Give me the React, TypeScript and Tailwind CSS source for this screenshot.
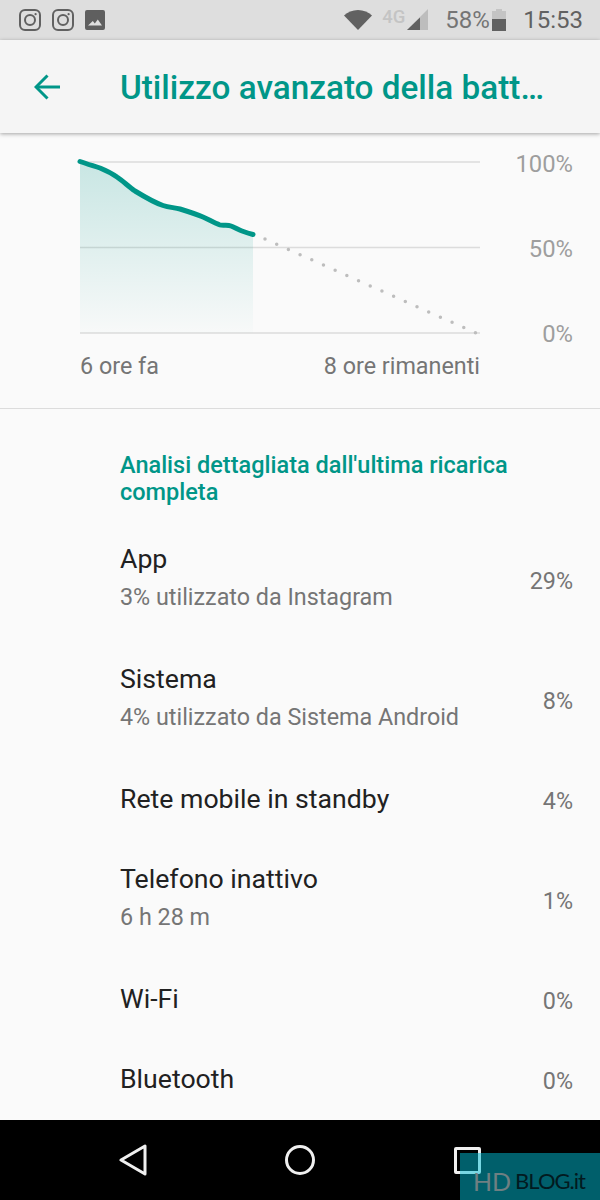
const curve = 'M80 161.5 C87 164 94 166 100 168 C106 170.5 112 173.5 117 177 C123 181 129 187 135 191 C144 196.5 154 202.5 163 205.5 C169 207.5 174 207.5 180 209 C188 211.5 196 214 203 217 C209 219.5 214 223 220 225 C223 226 227 224.5 231 226 C235 227.5 238 229.5 242 231 C246 232.5 249 233.5 253 234.5';
const area = curve + ' L253 333 L80 333 Z';

const rows = [
  { title: 'App', sub: '3% utilizzato da Instagram', pct: '29%' },
  { title: 'Sistema', sub: '4% utilizzato da Sistema Android', pct: '8%' },
  { title: 'Rete mobile in standby', pct: '4%' },
  { title: 'Telefono inattivo', sub: '6 h 28 m', pct: '1%' },
  { title: 'Wi-Fi', pct: '0%' },
  { title: 'Bluetooth', pct: '0%' },
];

function InstagramIcon() {
  return (
    <svg width="22" height="22" viewBox="0 0 22 22" fill="none" stroke="#616161" strokeWidth="2">
      <rect x="1" y="1" width="20" height="20" rx="5" />
      <circle cx="11" cy="11" r="5" />
      <circle cx="16.6" cy="5.2" r="1.1" fill="#616161" stroke="none" />
    </svg>
  );
}

function StatusBar() {
  return (
    <div className="h-10 bg-[#dedede] flex items-center pl-[19px] pr-[17px]">
      <div className="flex items-center gap-[11px]">
        <InstagramIcon />
        <InstagramIcon />
        <svg width="20" height="20" viewBox="0 0 20 20">
          <path fillRule="evenodd" d="M2 0h16a2 2 0 0 1 2 2v16a2 2 0 0 1-2 2H2a2 2 0 0 1-2-2V2a2 2 0 0 1 2-2z M3 15.5h14l-4.2-6-3 4-2-2.4z" fill="#5f5f5f" />
        </svg>
      </div>
      <div className="ml-auto flex items-center">
        <svg width="28" height="20" viewBox="0 0 28 20">
          <path d="M14 20L0 5.5C3.5 2.2 8.5 0 14 0s10.500 2.200 14 5.500z" fill="#616161" />
        </svg>
        <span className="ml-[10px] mb-[6px] w-[22px] text-[18.500px] leading-none font-medium text-[#c4c4c4]">4G</span>
        <svg className="ml-[3px]" width="21" height="22" viewBox="0 0 21 22">
          <path d="M21 0v21H0z" fill="#bdbdbd" />
          <path d="M13 8.500V21H0z" fill="#616161" />
        </svg>
        <span className="ml-[17px] w-[43px] text-[24px] leading-none text-[#757575]">58%</span>
        <svg className="ml-[4px]" width="14" height="22" viewBox="0 0 14 22">
          <path d="M4 0h6v2h4v20H0V2h4z" fill="#c4c4c4" />
          <path d="M0 10h14v12H0z" fill="#616161" />
        </svg>
        <span className="ml-[17px] text-[24px] leading-none text-[#616161]">15:53</span>
      </div>
    </div>
  );
}

function Toolbar() {
  return (
    <div className="relative z-10 h-[93px] bg-[#f5f5f5] flex items-center shadow-[0_1px_4px_rgba(0,0,0,0.35)]">
      <div className="w-[120px] pl-[34px] flex items-center">
        <svg width="26" height="26" viewBox="0 0 26 26" fill="none" stroke="#009688" strokeWidth="3">
          <path d="M26 13H2" />
          <path d="M13.500 1.500L2 13l11.500 11.500" />
        </svg>
      </div>
      <span className="text-[33.300px] leading-none font-medium text-[#009688] pt-[2px]">Utilizzo avanzato della batt…</span>
    </div>
  );
}

function Chart() {
  return (
    <div className="h-[276px] border-b border-[#dcdcdc] pt-[16px] pl-[80px] pr-[27px]">
      <div className="flex justify-between">
        <svg width="400" height="186" viewBox="80 149 400 186" className="overflow-visible">
          <defs>
            <linearGradient id="fade" x1="0" y1="0" x2="0" y2="1">
              <stop offset="0" stopColor="#009688" stopOpacity="0.2" />
              <stop offset="1" stopColor="#009688" stopOpacity="0.01" />
            </linearGradient>
          </defs>
          <path d="M80 162H480M80 247.500H480M80 333H480" stroke="#dcdcdc" strokeWidth="1.500" fill="none" />
          <path d={area} fill="url(#fade)" />
          <path d={curve} stroke="#009688" strokeWidth="5" fill="none" strokeLinecap="round" />
          <path d="M265 239L476 333" stroke="#bdbdbd" strokeWidth="3.500" strokeDasharray="0 12.800" strokeLinecap="round" fill="none" />
        </svg>
        <div className="h-[198px] mt-[1px] flex flex-col justify-between items-end text-[23.800px] leading-[28px] text-[#9e9e9e]">
          <span>100%</span>
          <span>50%</span>
          <span>0%</span>
        </div>
      </div>
      <div className="w-[400px] mt-[4px] flex justify-between text-[23.330px] leading-[28px] text-[#757575]">
        <span>6 ore fa</span>
        <span>8 ore rimanenti</span>
      </div>
    </div>
  );
}

function Row({ title, sub, pct }: { title: string; sub?: string; pct: string }) {
  return (
    <div className={`${sub ? 'h-[120px]' : 'h-[80px]'} flex items-center pl-[120px] pr-[27px]`}>
      <div className={`flex-1 flex flex-col gap-[7px] ${sub ? 'pb-[8px]' : 'pb-[6px]'}`}>
        <div className="text-[26.670px] leading-[31px] text-[#212121]">{title}</div>
        {sub && <div className="text-[23.330px] leading-[31px] text-[#757575]">{sub}</div>}
      </div>
      <span className="text-[23.330px] text-[#757575] pb-[1px]">{pct}</span>
    </div>
  );
}

function NavBar() {
  return (
    <div className="relative h-20 bg-black flex items-center justify-center">
      <div className="w-[167px] flex justify-center">
        <svg width="28" height="32" viewBox="0 0 28 32" fill="none" stroke="#f0f0f0" strokeWidth="3" strokeLinejoin="round">
          <path d="M26 2v28L2 16z" />
        </svg>
      </div>
      <div className="w-[167px] flex justify-center">
        <svg width="30" height="30" viewBox="0 0 30 30" fill="none" stroke="#f0f0f0" strokeWidth="3">
          <circle cx="15" cy="15" r="13.500" />
        </svg>
      </div>
      <div className="w-[167px] flex justify-center">
        <div className="w-[27px] h-[27px] border-[3px] border-[#f0f0f0] rounded-[2px]" />
      </div>
      <div className="absolute right-0 bottom-0 w-[140px] h-[47px] bg-[#00bed6]/50 flex items-center pl-[13px] pt-[9px] font-['Lato',sans-serif]">
        <span className="text-[25px] leading-none text-[#6f7f82]">HD</span>
        <span className="ml-[4px] text-[22px] leading-none text-[#021a20] tracking-[-1px]">BLOG.it</span>
      </div>
    </div>
  );
}

export default function App() {
  return (
    <div className="w-[600px] h-[1200px] overflow-hidden flex flex-col bg-[#fafafa] font-['Roboto',sans-serif]">
      <StatusBar />
      <Toolbar />
      <div className="flex-1 overflow-hidden">
        <Chart />
        <div className="pt-[43px] pl-[120px] pr-[60px] pb-[16px] text-[23.500px] leading-[27px] font-medium text-[#009688]">
          Analisi dettagliata dall'ultima ricarica completa
        </div>
        {rows.map((r) => (
          <Row key={r.title} title={r.title} sub={r.sub} pct={r.pct} />
        ))}
      </div>
      <NavBar />
    </div>
  );
}
